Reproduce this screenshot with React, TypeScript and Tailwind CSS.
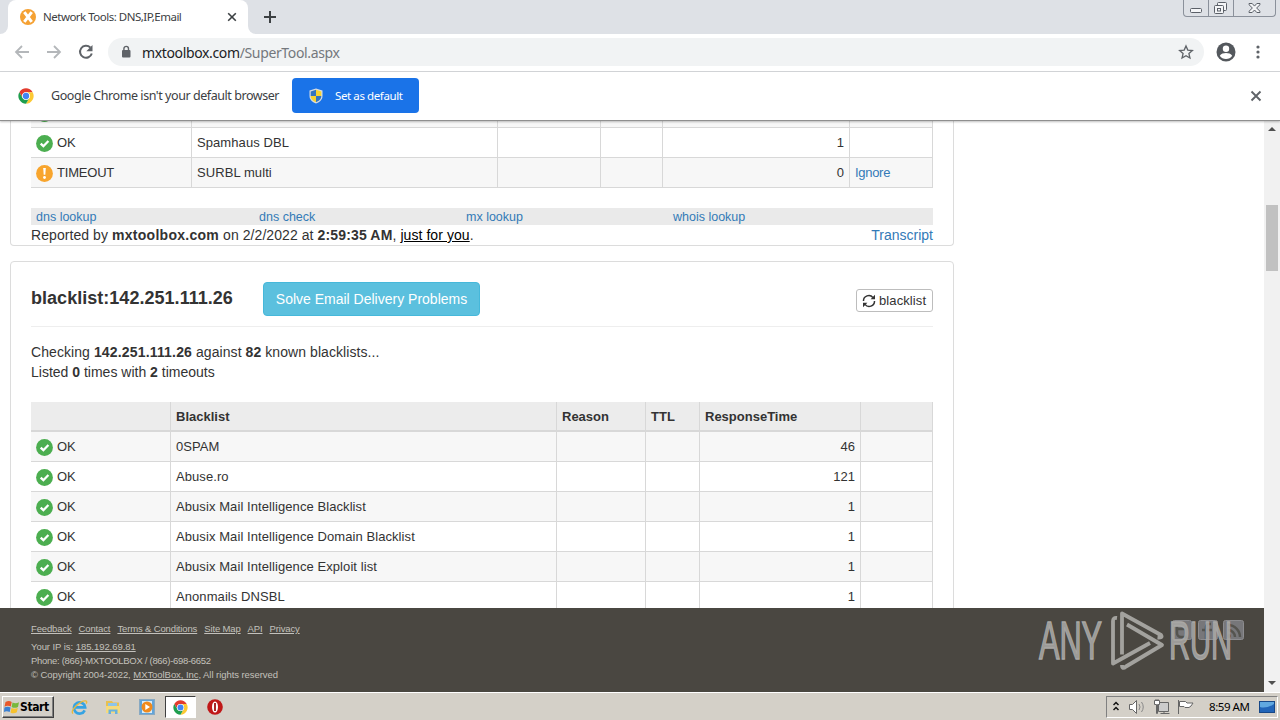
import type { ReactNode } from "react";

const okIcon = (
    <svg viewBox="0 0 17 17" className="w-[17px] h-[17px] shrink-0">
        <circle cx="8.5" cy="8.5" r="8.4" fill="#4cae50" />
        <path d="M4.7 8.6 7.4 11.2 12.4 6" fill="none" stroke="#fff" strokeWidth="2.3" />
    </svg>
);

const warnIcon = (
    <svg viewBox="0 0 17 17" className="w-[17px] h-[17px] shrink-0">
        <circle cx="8.5" cy="8.5" r="8.4" fill="#f8a52d" />
        <path d="M7.2 3h2.6l-.5 6.8H7.7z" fill="#fff" />
        <circle cx="8.5" cy="12.5" r="1.4" fill="#fff" />
    </svg>
);

function ChromeLogo({ className }: { className?: string }) {
    return (
        <svg viewBox="0 0 48 48" className={className}>
            <circle cx="24" cy="24" r="23" fill="#fff" />
            <path d="M4.1 12.5A23 23 0 0 1 43.9 12.5H24A11.5 11.5 0 0 0 14 29.8z" fill="#e33b2e" />
            <path d="M43.9 12.5A23 23 0 0 1 24 47L34 29.8A11.5 11.5 0 0 0 24 12.5z" fill="#fcc934" />
            <path d="M4.1 12.5A23 23 0 0 0 24 47L34 29.8A11.5 11.5 0 0 1 14 29.8z" fill="#1e9e4e" />
            <circle cx="24" cy="24" r="11.5" fill="#fff" />
            <circle cx="24" cy="24" r="9.5" fill="#4285f4" />
        </svg>
    );
}

function TabStrip() {
    return (
        <div className="flex h-[34px] shrink-0 justify-between bg-[#dee1e6]">
            <div className="flex">
                <div className="w-2 bg-white">
                    <div className="h-full rounded-br-lg bg-[#dee1e6]" />
                </div>
                <div className="flex w-[240px] items-center rounded-t-lg bg-white pl-3 pr-[10px]">
                    <svg viewBox="0 0 16 16" className="h-4 w-4">
                        <circle cx="8" cy="8" r="8" fill="#f5a133" />
                        <path d="M4.3 3.2 11.7 12.8M11.7 3.2 4.3 12.8" stroke="#fff" strokeWidth="3" />
                    </svg>
                    <span className="ml-[7px] flex-1 whitespace-nowrap text-[11.5px] tracking-[-0.5px] text-[#3c4043]">
                        Network Tools: DNS,IP,Email
                    </span>
                    <svg viewBox="0 0 12 12" className="h-3 w-3">
                        <path d="M2.2 2.2 9.8 9.8M9.8 2.2 2.2 9.8" stroke="#3c4043" strokeWidth="1.6" />
                    </svg>
                </div>
                <div className="w-2 bg-white">
                    <div className="h-full rounded-bl-lg bg-[#dee1e6]" />
                </div>
                <svg viewBox="0 0 14 14" className="mt-[10px] ml-[7px] h-[14px] w-[14px]">
                    <path d="M7 1v12M1 7h12" stroke="#3c4043" strokeWidth="2" />
                </svg>
            </div>
            <div className="mr-1 flex h-[17px] w-[93px] rounded-b border border-t-0 border-[#8b919b]">
                <svg viewBox="0 0 91 16" className="h-4 w-[91px]" fill="#f4f5f7" stroke="#5b6068">
                    <path d="M24.5 0v16M49.5 0v16" stroke="#8b919b" />
                    <rect x="6.5" y="8.5" width="11" height="4" rx="1" />
                    <rect x="33.5" y="2.5" width="9" height="8" rx="1" />
                    <rect x="30.5" y="5.5" width="9" height="8" rx="1" />
                    <rect x="33.5" y="8.5" width="3" height="2.5" />
                    <path d="M65 3.500h3.200l2.300 2.600 2.300-2.600H76v1.200L72.600 8l3.400 3.300v1.200h-3.200L70.500 10l-2.300 2.500H65v-1.200L68.400 8 65 4.700z" />
                </svg>
            </div>
        </div>
    );
}

function Toolbar() {
    return (
        <div className="flex h-[38px] shrink-0 items-center border-b border-[#d5d7da] bg-white pl-[14px] pr-5">
            <svg viewBox="0 0 82 18" className="mb-px h-[18px] w-[82px]" fill="none" strokeWidth="1.8">
                <path d="M15 9H2M8 3 2 9l6 6" stroke="#b4b7ba" />
                <path d="M33 9h13M40 3l6 6-6 6" stroke="#b4b7ba" />
                <path d="M76.300 4.500A6 6 0 1 0 77.800 10.500" stroke="#5f6368" strokeWidth="2" />
                <path d="M78.500 2v6.200h-6.200z" fill="#5f6368" />
            </svg>
            <div className="mb-px ml-3 flex h-7 flex-1 items-center rounded-full bg-[#f1f3f4] pl-3 pr-[10px]">
                <svg viewBox="0 0 12 14" className="h-[14px] w-3">
                    <rect x="2" y="5" width="8.500" height="7.500" rx="1" fill="#5f6368" />
                    <path d="M3.900 5.500V3.700a2.300 2.300 0 0 1 4.600 0v1.800" fill="none" stroke="#5f6368" strokeWidth="1.400" />
                </svg>
                <span className="ml-[10px] flex-1 text-[14px] tracking-[-0.360px] text-[#74787d]">
                    <span className="text-[#202124]">mxtoolbox.com</span>/SuperTool.aspx
                </span>
                <svg viewBox="0 0 24 24" className="h-4 w-4">
                    <path
                        d="M12 3l2.700 6.200 6.800.6-5.100 4.500 1.500 6.700L12 17.500 6.100 21l1.500-6.700-5.100-4.500 6.800-.6z"
                        fill="none"
                        stroke="#5f6368"
                        strokeWidth="2"
                    />
                </svg>
            </div>
            <svg viewBox="0 0 20 20" className="mb-px ml-[12px] h-5 w-5">
                <circle cx="10" cy="10" r="9.500" fill="#54585d" />
                <circle cx="10" cy="6.700" r="3.200" fill="#fff" />
                <path d="M3.800 13.800c1-2 4-2.700 6.200-2.700s5.200.7 6.200 2.700A7.500 7.500 0 0 1 10 17a7.500 7.500 0 0 1-6.200-3.200z" fill="#fff" />
            </svg>
            <svg viewBox="0 0 4 16" className="mb-px ml-5 h-4 w-1" fill="#5f6368">
                <circle cx="2" cy="3" r="1.600" />
                <circle cx="2" cy="8" r="1.600" />
                <circle cx="2" cy="13" r="1.600" />
            </svg>
        </div>
    );
}

function DefaultBrowserBar() {
    return (
        <div className="z-10 flex h-[49px] shrink-0 items-center border-b border-[#8f8f8f] bg-white pl-[18px] pr-[18px] shadow-[0_1px_2px_rgba(0,0,0,0.25)]">
            <ChromeLogo className="h-4 w-4" />
            <span className="ml-[17px] w-[241px] whitespace-nowrap text-[12.5px] tracking-[-0.440px] text-[#3c4043]">
                Google Chrome isn't your default browser
            </span>
            <button className="mb-px flex h-[35px] w-[127px] items-center rounded bg-[#1a73e8] pl-4 text-[11.5px] tracking-[-0.400px] text-white">
                <svg viewBox="0 0 16 16" className="h-4 w-4">
                    <path d="M8 .5 14.500 2.500V8c0 4-3.500 6.500-6.500 7.500C5 14.500 1.500 12 1.500 8V2.500z" fill="#d7dde3" />
                    <path d="M8 1.800V8H2.700V3.400z" fill="#3475c0" />
                    <path d="M8 1.800V8h5.300V3.400z" fill="#f7d331" />
                    <path d="M8 14.200V8H2.700c0 3.400 2.800 5.300 5.300 6.200z" fill="#f7d331" />
                    <path d="M8 14.200V8h5.300c0 3.400-2.800 5.300-5.300 6.200z" fill="#3475c0" />
                </svg>
                <span className="ml-[11px] whitespace-nowrap">Set as default</span>
            </button>
            <svg viewBox="0 0 12 12" className="ml-auto h-3 w-3">
                <path d="M1.500 1.500 10.500 10.500M10.500 1.500 1.500 10.500" stroke="#5f6368" strokeWidth="1.900" />
            </svg>
        </div>
    );
}

type RowProps = {
    cols: string;
    status: string;
    name: string;
    time: string;
    striped?: boolean;
    action?: ReactNode;
};

function ResultRow({ cols, status, name, time, striped, action }: RowProps) {
    const cell = "border-r border-[#d8d8d8] px-[5px] whitespace-nowrap";
    return (
        <div
            className={`grid h-[30px] border-b border-[#d8d8d8] text-[13px] leading-[29px] ${cols} ${striped ? "bg-[#f7f7f7]" : "bg-white"}`}
        >
            <div className={`${cell} flex`}>
                <div className="mt-[7px] mr-1">{status === "TIMEOUT" ? warnIcon : okIcon}</div>
                <span className="tracking-[-0.200px]">{status}</span>
            </div>
            <div className={`${cell} tracking-[0.080px]`}>{name}</div>
            <div className={cell} />
            <div className={cell} />
            <div className={`${cell} text-right`}>{time}</div>
            <div className={`${cell} tracking-[-0.300px] text-[#337ab7]`}>{action}</div>
        </div>
    );
}

const domainCols = "grid-cols-[161px_306px_103px_62px_187px_83px]";
const ipCols = "grid-cols-[140px_386px_89px_54px_161px_72px]";

const blacklists = [
    { name: "0SPAM", time: "46" },
    { name: "Abuse.ro", time: "121" },
    { name: "Abusix Mail Intelligence Blacklist", time: "1" },
    { name: "Abusix Mail Intelligence Domain Blacklist", time: "1" },
    { name: "Abusix Mail Intelligence Exploit list", time: "1" },
    { name: "Anonmails DNSBL", time: "1" },
];

function DomainCard() {
    return (
        <div className="-mt-[23px] h-[148px] w-[944px] shrink-0 rounded-b border border-t-0 border-[#dcdcdc] px-5">
            <ResultRow cols={domainCols} status="" name="" time="" striped />
            <ResultRow cols={domainCols} status="OK" name="Spamhaus DBL" time="1" />
            <ResultRow cols={domainCols} status="TIMEOUT" name="SURBL multi" time="0" striped action="Ignore" />
            <div className="mt-5 grid h-[17px] grid-cols-[223px_207px_207px_1fr] bg-[#eaeaea] pl-[5px] text-[12.500px] leading-[18px] text-[#337ab7]">
                <span>dns lookup</span>
                <span>dns check</span>
                <span>mx lookup</span>
                <span>whois lookup</span>
            </div>
            <div className="flex justify-between text-[14px] leading-5">
                <span className="tracking-[0.070px]">
                    Reported by <b className="tracking-[0.280px]">mxtoolbox.com</b> on 2/2/2022 at{" "}
                    <b className="tracking-[0.150px]">2:59:35 AM</b>, <span className="text-black underline">just for you</span>.
                </span>
                <span className="text-[#337ab7]">Transcript</span>
            </div>
        </div>
    );
}

function IpCard() {
    return (
        <div className="mt-[15px] h-[400px] w-[944px] shrink-0 rounded-t border border-[#dcdcdc] px-5">
            <div className="flex h-[65px] items-start border-b border-[#eeeeee]">
                <h2 className="mt-[26px] w-[232px] text-[18px] leading-5 font-bold tracking-[0.030px]">blacklist:142.251.111.26</h2>
                <button className="mt-5 h-[34px] w-[217px] rounded border border-[#46b8da] bg-[#5bc0de] text-[14px] text-white">
                    Solve Email Delivery Problems
                </button>
                <button className="mt-[27px] ml-auto flex h-[23px] w-[77px] items-center rounded-[3px] border border-[#bdbdbd] pl-[5px] text-[13px] tracking-[0.100px]">
                    <svg viewBox="0 0 14 14" className="mr-[3px] h-[14px] w-[14px]" fill="none" stroke="#333" strokeWidth="1.500">
                        <path d="M1.500 7A5.300 5.300 0 0 1 11 3.600M12.500 7A5.300 5.300 0 0 1 3 10.400" />
                        <path d="M13 .8v4.400H8.600zM1 13.200V8.800h4.400z" fill="#333" stroke="none" />
                    </svg>
                    blacklist
                </button>
            </div>
            <div className="mt-[15px] text-[14px] leading-5">
                <p className="tracking-[0.070px]">
                    Checking <b className="tracking-[0.170px]">142.251.111.26</b> against <b>82</b> known blacklists...
                </p>
                <p>
                    Listed <b>0</b> times with <b>2</b> timeouts
                </p>
            </div>
            <div className={`mt-5 grid h-[30px] border-b-2 border-[#d8d8d8] bg-[#ececec] text-[13px] leading-[29px] font-bold ${ipCols}`}>
                {["", "Blacklist", "Reason", "TTL", "ResponseTime", ""].map((label, i) => (
                    <div key={i} className="border-r border-[#d8d8d8] pl-[5px]">
                        {label}
                    </div>
                ))}
            </div>
            {blacklists.map((b, i) => (
                <ResultRow key={b.name} cols={ipCols} status="OK" name={b.name} time={b.time} striped={i % 2 === 0} />
            ))}
        </div>
    );
}

function Footer() {
    return (
        <div className="relative h-[84px] shrink-0 bg-[#4a4741] pt-[14px] pl-[31px] text-[9.500px] leading-[14px] tracking-[-0.060px] text-[#c3c1bc]">
            <div className="mb-1 flex gap-[7px] tracking-[-0.140px]">
                {["Feedback", "Contact", "Terms & Conditions", "Site Map", "API", "Privacy"].map((l) => (
                    <a key={l} className="underline">
                        {l}
                    </a>
                ))}
            </div>
            <p>
                Your IP is: <span className="underline">185.192.69.81</span>
            </p>
            <p className="tracking-[-0.300px]">Phone: (866)-MXTOOLBOX / (866)-698-6652</p>
            <p>
                © Copyright 2004-2022, <span className="underline">MXToolBox, Inc</span>, All rights reserved
            </p>
            <svg viewBox="0 0 212 66" className="absolute top-0 right-[16px] h-[66px] w-[212px]">
                <g fill="#77777a" stroke="#8c8c8f">
                    <rect x="136.500" y="12.500" width="19" height="19" rx="2" />
                    <rect x="162.500" y="12.500" width="19" height="19" rx="2" />
                    <rect x="187.500" y="12.500" width="20" height="19" rx="2" />
                </g>
                <g fill="none" stroke="#55544f" strokeWidth="2.500">
                    <path d="M141 17v8a4 4 0 0 0 4 4h6M141 21h8" />
                    <path d="M175 16h-2a3 3 0 0 0-3 3v12M166 22h10" />
                    <path d="M192 22a7 7 0 0 1 7 7M192 17a12 12 0 0 1 12 12" />
                </g>
                <circle cx="193" cy="28" r="2" fill="#55544f" />
                <g fill="#a9a8a5" stroke="#a9a8a5" strokeWidth="1.400" fillOpacity="0.900" fontFamily="Liberation Sans" fontSize="53">
                    <text transform="translate(3 51) scale(0.58 1)">ANY</text>
                    <text transform="translate(133 51) scale(0.55 1)">RUN</text>
                </g>
            </svg>
            <svg
                viewBox="0 0 56 64"
                className="absolute top-[1px] left-[1109px] h-[64px] w-[56px]"
                fill="none"
                stroke="#a3a29e"
                strokeWidth="3.800"
                strokeLinejoin="round"
            >
                <path d="M8 9Q4 8.500 4 12V54.500L41 34" />
                <path d="M13 45.500V4.500L52 26Q54 29 48.500 28.500" />
                <path d="M18 15.500 53 36 17 57.500Q13 61 13 56" />
            </svg>
        </div>
    );
}

function Scrollbar() {
    return (
        <div className="flex w-4 shrink-0 flex-col items-center bg-[#f1f1f1]">
            <div className="mt-[6px] border-x-[4px] border-b-[4px] border-x-transparent border-b-[#505050]" />
            <div className="mt-[74px] h-[66px] w-3 bg-[#c1c1c1]" />
            <div className="mt-auto mb-[7px] border-x-[4px] border-t-[4px] border-x-transparent border-t-[#505050]" />
        </div>
    );
}

function Taskbar() {
    return (
        <div className="flex h-7 shrink-0 items-start border-t border-white bg-[#d4d0c8] pt-[3px] pl-[2px]">
            <div className="flex h-[22px] w-[52px] items-center border border-t-white border-r-[#404040] border-b-[#404040] border-l-white pl-px font-['DejaVu_Sans_Condensed','DejaVu_Sans'] text-[12px] font-bold tracking-[-0.400px] text-black shadow-[inset_-1px_-1px_0_#808080]">
                <svg viewBox="0 0 16 16" className="h-4 w-4 shrink-0">
                    <path d="M1.500 3Q5 1 7.700 3L6.800 7.500Q3.500 6 .5 7.700z" fill="#e8582a" />
                    <path d="M8.500 3.400Q11.500 5 15 3.300L14 8Q10.500 9.700 7.600 8z" fill="#78b83c" />
                    <path d="M.4 8.500Q3.500 7 6.600 8.400L5.700 13Q2.500 11.500 0 13z" fill="#3a80d2" />
                    <path d="M7.500 8.900Q10.500 10.500 13.800 8.900L12.800 13.300Q9.500 15.300 6.500 13.500z" fill="#f7c22e" />
                </svg>
                Start
            </div>
            <svg viewBox="0 0 18 18" className="mt-[3px] ml-[17px] h-[17px] w-[17px]" fill="none">
                <path d="M14.500 12A6 6 0 1 1 15 8.800H4" stroke="#35a3e3" strokeWidth="2.800" />
                <path d="M2 15.500C-1 12 10 1.500 15.500 2q2 .5.5 3" stroke="#e9b93c" strokeWidth="1.500" />
            </svg>
            <svg viewBox="0 0 16 16" className="mt-[3px] ml-[17px] h-4 w-4">
                <path d="M1 2h6l1 1.500h6V14H1z" fill="#e8c050" />
                <path d="M3 4h9v4H3z" fill="#8cc4ea" />
                <path d="M1 7h14v7H1z" fill="#f5da7c" />
                <path d="M3.500 15v-4.500h9V15h-2.500v-2.500H6V15z" fill="#69b1dc" />
            </svg>
            <svg viewBox="0 0 16 16" className="mt-[3px] ml-[18px] h-4 w-4">
                <rect x=".5" y=".5" width="15" height="15" fill="#62a4d8" stroke="#88a9c2" />
                <rect x="3" y="2" width="10" height="12" fill="#d9ecf8" />
                <circle cx="8" cy="8" r="5.500" fill="#f18a1c" />
                <path d="M6.300 5v6L11 8z" fill="#fff" />
            </svg>
            <div className="ml-[10px] flex h-[22px] w-[31px] items-center justify-center border border-t-[#404040] border-r-white border-b-white border-l-[#404040] bg-white">
                <ChromeLogo className="h-[15px] w-[15px]" />
            </div>
            <svg viewBox="0 0 16 16" className="mt-[3px] ml-[11px] h-4 w-4">
                <circle cx="8" cy="8" r="7.800" fill="#c01818" />
                <ellipse cx="8" cy="8" rx="3" ry="5.500" fill="#fff" />
                <path d="M8 4v8" stroke="#a01010" strokeWidth="1.800" />
            </svg>
            <div className="mr-[2px] ml-auto flex h-[22px] w-[172px] items-center border border-t-[#808080] border-r-white border-b-white border-l-[#808080] pl-[6px]">
                <svg viewBox="0 0 90 18" className="h-[18px] w-[90px] shrink-0" fill="#fff" stroke="#666">
                    <path d="M.5 7 3 4.500 5.500 7M.5 12 3 9.500 5.500 12" fill="none" stroke="#111" strokeWidth="1.500" />
                    <path d="M16.500 6.500h3l4-4v13l-4-4h-3z" />
                    <path d="M26 6q2 3 0 6M28.500 4q3.500 5 0 10" fill="none" stroke="#888" />
                    <path d="M45.500 4.500h10v9h-10zM47.500 15.500h9M51 13.500v2" fill="#ccc" />
                    <path d="M41.500 2.500h5v4h-2v9h-1v-9h-2zM43 1v2M45 1v2" />
                    <path d="M65.500 2v14M66.500 3.500h6l1.500 1.500h6l-2 3-2 1.500h-4l-1-1h-4.500z" />
                </svg>
                <span className="ml-[6px] w-[50px] text-[11.500px] leading-4 tracking-[-0.450px] whitespace-nowrap text-black">8:59 AM</span>
                <svg viewBox="0 0 16 14" className="h-[14px] w-4 shrink-0">
                    <rect x=".5" y="1.500" width="15" height="11" fill="#2265b8" stroke="#174888" />
                    <path d="M1 2h14v2Q7 9 1 7z" fill="#60a8e0" />
                </svg>
            </div>
        </div>
    );
}

export default function App() {
    return (
        <div className="flex h-[720px] w-[1280px] flex-col overflow-hidden bg-white font-['Noto_Sans','Open_Sans',sans-serif]">
            <TabStrip />
            <Toolbar />
            <DefaultBrowserBar />
            <div className="flex h-[571px] shrink-0">
                <div className="flex w-[1264px] flex-col font-['Liberation_Sans',Arial,sans-serif] text-[#333]">
                    <div className="flex h-[487px] shrink-0 flex-col overflow-hidden pl-[10px]">
                        <DomainCard />
                        <IpCard />
                    </div>
                    <Footer />
                </div>
                <Scrollbar />
            </div>
            <Taskbar />
        </div>
    );
}
